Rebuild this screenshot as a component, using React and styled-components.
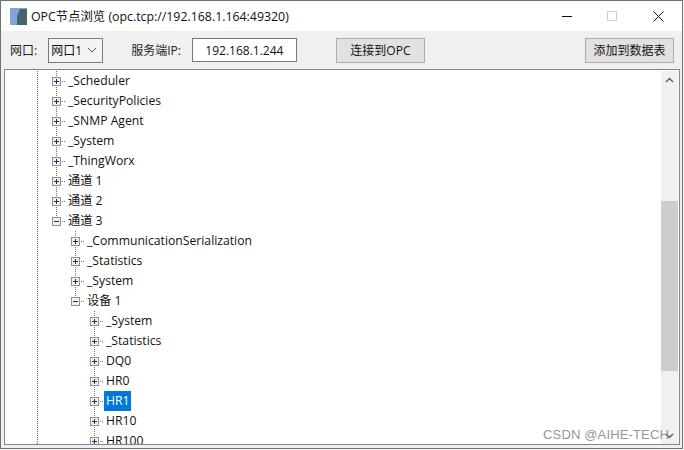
import React from 'react';
import styled, {createGlobalStyle} from 'styled-components';

const GlobalStyle = createGlobalStyle`
html, body {
    margin: 0;
    padding: 0;
    background: #fff;
}
`;

const FONT = '"Open Sans", "Noto Sans CJK SC", sans-serif';

const Window = styled.div`
position: relative;
width: 683px;
height: 449px;
box-sizing: border-box;
border: 1px solid #6d7073;
background: #f0f0f0;
display: flex;
flex-direction: column;
font-family: ${FONT};
font-size: 12px;
color: #111;
overflow: hidden;
`;

const TitleBar = styled.div`
height: 30px;
flex: none;
background: #fff;
display: flex;
align-items: center;
padding-left: 9px;
padding-right: 1px;
`;

const AppIcon = styled.svg`
width: 17px;
height: 17px;
flex: none;
margin-right: 4px;
`;

const Title = styled.div`
font-size: 12.35px;
flex: 1;
white-space: nowrap;
`;

const WinButton = styled.div`
width: ${p => p.$w}px;
height: 30px;
display: flex;
align-items: center;
justify-content: center;
`;

const Toolbar = styled.div`
height: 38px;
flex: none;
display: flex;
align-items: center;
padding-left: 9px;
padding-right: 8px;
box-sizing: border-box;
`;

const Label = styled.span`
margin-right: ${p => p.$gap}px;
white-space: nowrap;
color: #222;
`;

const Combo = styled.div`
width: 55px;
height: 25px;
box-sizing: border-box;
border: 1px solid #7a7a7a;
background: #f3f3f3;
display: flex;
align-items: center;
justify-content: space-between;
padding: 0 5px 0 2px;
margin-right: 28px;
`;

const IpInput = styled.div`
width: 105px;
height: 24px;
box-sizing: border-box;
border: 1px solid #7a7a7a;
background: #fff;
display: flex;
align-items: center;
justify-content: center;
margin-right: 39px;
`;

const Button = styled.div`
width: ${p => p.$w}px;
height: 25px;
box-sizing: border-box;
border: 1px solid #adadad;
background: #e1e1e1;
display: flex;
align-items: center;
justify-content: center;
margin-left: ${p => (p.$right ? 'auto' : '0')};
white-space: nowrap;
`;

const TreeBox = styled.div`
flex: none;
height: 376px;
margin: 0 2px 0 3px;
box-sizing: border-box;
border: 1px solid #828790;
background: #fff;
display: flex;
overflow: hidden;
`;

const TreeList = styled.div`
flex: 1;
padding-top: 1px;
overflow: hidden;
`;

const Row = styled.div`
position: relative;
height: 20px;
display: flex;
align-items: center;
padding-left: ${p => p.$indent}px;
font-size: 12.2px;
white-space: nowrap;
`;

const Guide = styled.span`
position: absolute;
left: ${p => p.$x}px;
top: 0;
bottom: ${p => (p.$half ? '10px' : '0')};
width: 1px;
background: repeating-linear-gradient(to bottom, #6f6f6f 0 1px, transparent 1px 2px);
`;

const Expander = styled.svg`
width: 14px;
height: 9px;
flex: none;
position: relative;
`;

const NodeText = styled.span`
padding: 0 2px;
height: 20px;
line-height: 20px;
background: ${p => (p.$selected ? '#0078d7' : 'transparent')};
color: ${p => (p.$selected ? '#fff' : '#111')};
`;

const ScrollBar = styled.div`
width: 17px;
flex: none;
background: #f0f0f0;
display: flex;
flex-direction: column;
margin-right: 1px;
margin-top: 1px;
`;

const ScrollArrow = styled.div`
height: 17px;
flex: none;
display: flex;
align-items: center;
justify-content: center;
`;

const ScrollTrack = styled.div`
flex: 1;
padding-top: 113px;
padding-bottom: 56px;
display: flex;
`;

const ScrollThumb = styled.div`
flex: 1;
background: #cdcdcd;
`;

const Watermark = styled.div`
position: absolute;
right: 13px;
bottom: 6px;
font-family: "Liberation Sans", sans-serif;
font-size: 13px;
color: rgba(120, 120, 120, 0.8);
letter-spacing: 0.15px;
`;

function ExpandIcon({open}) {
    return (
        <Expander viewBox="0 0 14 9">
            <rect x="0.5" y="0.5" width="8" height="8" fill="#f0f0f0" stroke="#919191" />
            <path d="M2 4.5H7" stroke="#1f2f55" />
            {!open && <path d="M4.5 2V7" stroke="#1f2f55" />}
            <path d="M10 4.5H11M12 4.5H13" stroke="#777" />
        </Expander>
    );
}

const INDENT = {2: 47, 3: 66, 4: 85};
const LINE = {2: 51, 3: 70, 4: 89};

const rows = [
    {level: 2, text: '_Scheduler'},
    {level: 2, text: '_SecurityPolicies'},
    {level: 2, text: '_SNMP Agent'},
    {level: 2, text: '_System'},
    {level: 2, text: '_ThingWorx'},
    {level: 2, text: '通道 1'},
    {level: 2, text: '通道 2'},
    {level: 2, text: '通道 3', open: true, last: true},
    {level: 3, text: '_CommunicationSerialization'},
    {level: 3, text: '_Statistics'},
    {level: 3, text: '_System'},
    {level: 3, text: '设备 1', open: true, last: true},
    {level: 4, text: '_System'},
    {level: 4, text: '_Statistics'},
    {level: 4, text: 'DQ0'},
    {level: 4, text: 'HR0'},
    {level: 4, text: 'HR1', selected: true},
    {level: 4, text: 'HR10'},
    {level: 4, text: 'HR100'},
];

function App() {
    return (
        <Window>
            <GlobalStyle />
            <TitleBar>
                <AppIcon viewBox="0 0 17 17">
                    <rect width="17" height="17" fill="#7ea6d8" />
                    <path d="M7 17V8L10 1H17V17Z" fill="#44646a" />
                </AppIcon>
                <Title>OPC节点浏览 (opc.tcp://192.168.1.164:49320)</Title>
                <WinButton $w={44}>
                    <svg width="11" height="11" viewBox="0 0 11 11"><path d="M0 5.5H10" stroke="#111" /></svg>
                </WinButton>
                <WinButton $w={46}>
                    <svg width="11" height="11" viewBox="0 0 11 11"><rect x="0.5" y="0.5" width="9" height="9" fill="none" stroke="#cfcfcf" /></svg>
                </WinButton>
                <WinButton $w={46}>
                    <svg width="11" height="11" viewBox="0 0 11 11"><path d="M0.5 0.5L10.5 10.5M10.5 0.5L0.5 10.5" stroke="#111" /></svg>
                </WinButton>
            </TitleBar>
            <Toolbar>
                <Label $gap={11}>网口:</Label>
                <Combo>
                    <span>网口1</span>
                    <svg width="10" height="6" viewBox="0 0 10 6"><path d="M1 1L5 5L9 1" fill="none" stroke="#555" /></svg>
                </Combo>
                <Label $gap={11}>服务端IP:</Label>
                <IpInput>192.168.1.244</IpInput>
                <Button $w={89}>连接到OPC</Button>
                <Button $w={89} $right>添加到数据表</Button>
            </Toolbar>
            <TreeBox>
                <TreeList>
                    {rows.map((r, i) => (
                        <Row key={i} $indent={INDENT[r.level]}>
                            <Guide $x={32} />
                            <Guide $x={LINE[r.level]} $half={r.last} />
                            <ExpandIcon open={r.open} />
                            <NodeText $selected={r.selected}>{r.text}</NodeText>
                        </Row>
                    ))}
                </TreeList>
                <ScrollBar>
                    <ScrollArrow>
                        <svg width="9" height="6" viewBox="0 0 9 6"><path d="M1 5L4.5 1.5L8 5" fill="none" stroke="#606060" strokeWidth="1.5" /></svg>
                    </ScrollArrow>
                    <ScrollTrack><ScrollThumb /></ScrollTrack>
                    <ScrollArrow>
                        <svg width="9" height="6" viewBox="0 0 9 6"><path d="M1 1L4.5 4.5L8 1" fill="none" stroke="#606060" strokeWidth="1.5" /></svg>
                    </ScrollArrow>
                </ScrollBar>
            </TreeBox>
            <Watermark>CSDN @AIHE-TECH</Watermark>
        </Window>
    );
}

export default App;
